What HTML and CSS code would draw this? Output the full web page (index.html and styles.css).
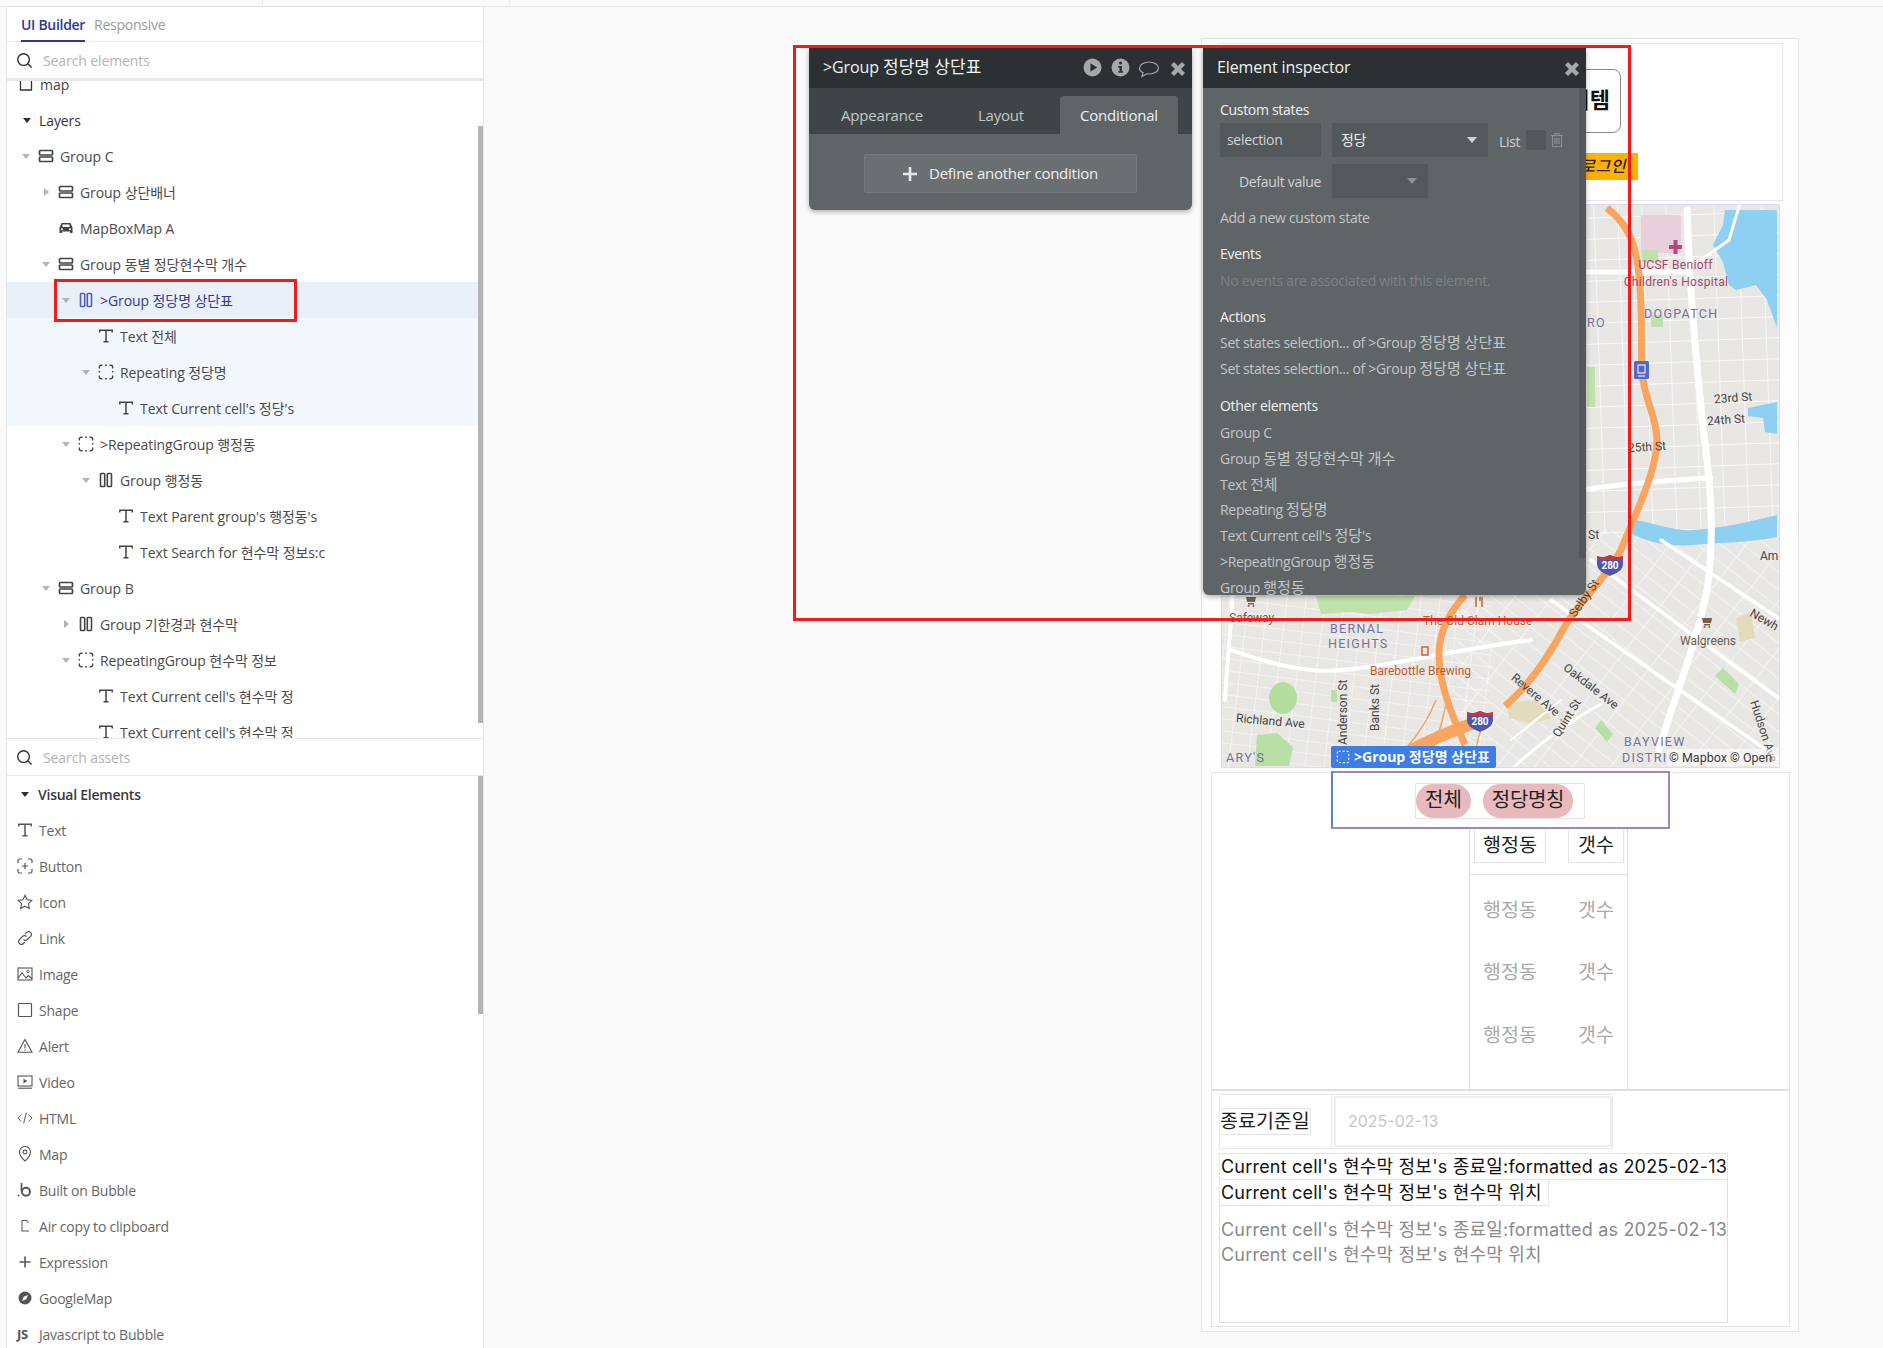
FILE: index.html
```html
<!DOCTYPE html>
<html lang="ko">
<head>
<meta charset="utf-8">
<title>UI Builder</title>
<link rel="stylesheet" href="styles.css">
</head>
<body>
<svg class="defs" width="0" height="0" aria-hidden="true">
  <symbol id="i-stack" viewBox="0 0 16 16"><g fill="none" stroke="currentColor" stroke-width="1.7"><rect x="1.5" y="2.5" width="13" height="4.5" rx=".8"/><rect x="1.5" y="9" width="13" height="4.5" rx=".8"/></g></symbol>
  <symbol id="i-col" viewBox="0 0 16 16"><g fill="none" stroke="currentColor" stroke-width="1.6"><rect x="2.500" y="1.500" width="4.200" height="13" rx=".8"/><rect x="9.300" y="1.500" width="4.200" height="13" rx=".8"/></g></symbol>
  <symbol id="i-rep" viewBox="0 0 18 18"><path d="M1.500 5V3.500a2 2 0 0 1 2-2H5M8 1.500h2M13 1.500h1.500a2 2 0 0 1 2 2V5M16.500 8v1.500M16.500 13v1.500a2 2 0 0 1-2 2H13M10 16.500H8M5 16.500H3.500a2 2 0 0 1-2-2V13M1.500 9.500V8" fill="none" stroke="currentColor" stroke-width="1.600"/></symbol>
  <symbol id="i-t" viewBox="0 0 16 16"><path d="M1.800 4.500V2.300h12.400v2.200M8 2.300v11.400M5.500 13.700h5" fill="none" stroke="currentColor" stroke-width="1.500"/></symbol>
  <symbol id="i-car" viewBox="0 0 16 16"><path d="M3.500 3h9l2 4.500V13h-2.500v-1.500H4V13H1.500V7.500z" fill="currentColor"/><rect x="4.500" y="4.500" width="7" height="2.500" fill="#fff"/><circle cx="4" cy="9.300" r="1" fill="#fff"/><circle cx="12" cy="9.300" r="1" fill="#fff"/></symbol>
  <symbol id="i-search" viewBox="0 0 18 18"><circle cx="8" cy="8" r="6.200" fill="none" stroke="currentColor" stroke-width="1.500"/><path d="M12.500 12.500l4 4" stroke="currentColor" stroke-width="1.500"/></symbol>
  <symbol id="i-page" viewBox="0 0 14 14"><path d="M4 1H1.500v12h11V1h-2.500" fill="none" stroke="currentColor" stroke-width="1.300"/></symbol>
  <symbol id="i-btn" viewBox="0 0 16 16"><path d="M1 5V2.500A1.500 1.500 0 0 1 2.500 1H5M11 1h2.500A1.500 1.500 0 0 1 15 2.500V5M15 11v2.500a1.500 1.500 0 0 1-1.500 1.500H11M5 15H2.500A1.500 1.500 0 0 1 1 13.500V11M8 5v6M5 8h6" fill="none" stroke="currentColor" stroke-width="1.200"/></symbol>
  <symbol id="i-star" viewBox="0 0 16 16"><path d="M8 1.300l2.100 4.400 4.800.7-3.500 3.300.9 4.800L8 12.200l-4.300 2.300.9-4.800L1.100 6.400l4.800-.7z" fill="none" stroke="currentColor" stroke-width="1.100"/></symbol>
  <symbol id="i-link" viewBox="0 0 16 16"><path d="M6.500 9.500a2.800 2.800 0 0 0 4 0l3-3a2.800 2.800 0 0 0-4-4L8.200 3.800M9.500 6.500a2.800 2.800 0 0 0-4 0l-3 3a2.800 2.800 0 0 0 4 4l1.300-1.300" fill="none" stroke="currentColor" stroke-width="1.100"/></symbol>
  <symbol id="i-img" viewBox="0 0 16 16"><rect x="1" y="2" width="14" height="12" fill="none" stroke="currentColor" stroke-width="1.100"/><path d="M1 12l4-5 4 5 2.500-2.500L15 13" fill="none" stroke="currentColor" stroke-width="1.100"/><circle cx="11" cy="5.500" r="1.200" fill="none" stroke="currentColor"/></symbol>
  <symbol id="i-shape" viewBox="0 0 16 16"><rect x="1.500" y="1.500" width="13" height="13" rx=".8" fill="none" stroke="currentColor" stroke-width="1.200"/></symbol>
  <symbol id="i-dash" viewBox="0 0 16 16"><rect x="1.500" y="1.500" width="13" height="13" rx="1.500" fill="none" stroke="currentColor" stroke-width="1.400" stroke-dasharray="2.500 2"/></symbol>
  <symbol id="i-alert" viewBox="0 0 16 16"><path d="M8 1.500l7 12.700H1zM8 6v4.500M8 11.500v1.300" fill="none" stroke="currentColor" stroke-width="1.100"/></symbol>
  <symbol id="i-video" viewBox="0 0 16 16"><rect x="1" y="2" width="14" height="10" fill="none" stroke="currentColor" stroke-width="1.100"/><path d="M6.500 4.700l4 2.300-4 2.300z" fill="currentColor"/><path d="M1 14.200h14" stroke="currentColor" stroke-width="1.100"/></symbol>
  <symbol id="i-html" viewBox="0 0 18 16"><path d="M5 4L1 8l4 4M13 4l4 4-4 4M10.500 2l-3 12" fill="none" stroke="currentColor" stroke-width="1.100"/></symbol>
  <symbol id="i-pin" viewBox="0 0 16 16"><path d="M8 15.200S2.500 10 2.500 6a5.500 5.500 0 0 1 11 0c0 4-5.500 9.200-5.500 9.200z" fill="none" stroke="currentColor" stroke-width="1.100"/><circle cx="8" cy="6" r="1.900" fill="none" stroke="currentColor" stroke-width="1.100"/></symbol>
  <symbol id="i-bubble" viewBox="0 0 16 16"><path d="M4.500 1v8.500" stroke="currentColor" stroke-width="1.700"/><circle cx="9" cy="9.800" r="4" fill="none" stroke="currentColor" stroke-width="1.900"/><circle cx="1.500" cy="13.500" r=".9" fill="currentColor"/></symbol>
  <symbol id="i-copy" viewBox="0 0 16 16"><path d="M4.500 2h5.500l1.500 1.500V5h-1V3.500L9.500 3H5.500v9.500H12v1H4.500z" fill="currentColor"/></symbol>
  <symbol id="i-plus" viewBox="0 0 16 16"><path d="M8 2.500v11M2.500 8h11" stroke="currentColor" stroke-width="1.600"/></symbol>
  <symbol id="i-plus-b" viewBox="0 0 16 16"><path d="M8 1v14M1 8h14" stroke="currentColor" stroke-width="2.600"/></symbol>
  <symbol id="i-compass" viewBox="0 0 16 16"><circle cx="8" cy="8" r="6.500" fill="currentColor"/><path d="M11 5l-1.800 4.200L5 11l1.800-4.200z" fill="#fff"/></symbol>
  <symbol id="i-play" viewBox="0 0 18 18"><circle cx="9" cy="9" r="8.500" fill="currentColor"/><path d="M7 5l6.500 4L7 13z" fill="#2b3133"/></symbol>
  <symbol id="i-info" viewBox="0 0 18 18"><circle cx="9" cy="9" r="8.500" fill="currentColor"/><circle cx="9" cy="4.700" r="1.500" fill="#2b3133"/><path d="M6.800 7.500h3.500v5h1.200V14H6.800v-1.500H8V9H6.800z" fill="#2b3133"/></symbol>
  <symbol id="i-chat" viewBox="0 0 22 18"><path d="M11 2c5 0 9.500 2.500 9.500 6s-4.500 6-9.500 6c-.8 0-1.500 0-2.300-.2L4 16.500l1-3.800C2.800 11.700 1.500 10 1.500 8 1.500 4.500 6 2 11 2z" fill="none" stroke="currentColor" stroke-width="1.200"/></symbol>
  <symbol id="i-x" viewBox="0 0 14 14"><path d="M2.200 2.200l9.600 9.600M11.800 2.200l-9.600 9.600" stroke="currentColor" stroke-width="3.800"/></symbol>
  <symbol id="i-trash" viewBox="0 0 14 16"><path d="M1 3.500h12M5 3.500V1.500h4v2M2.500 3.500v11h9v-11M5 6v6M7 6v6M9 6v6" fill="none" stroke="currentColor" stroke-width="1.100"/></symbol>
  <symbol id="i-cart" viewBox="0 0 12 12"><path d="M1 2h10l-1 5H2zM3 8h6v1.500H3z" fill="currentColor"/><circle cx="3.500" cy="11" r="1" fill="currentColor"/><circle cx="8.500" cy="11" r="1" fill="currentColor"/></symbol>
</svg>

<div class="topstrip"><span class="tick tick-a"></span><span class="tick tick-b"></span></div>

<div class="app">
  <aside class="sidebar">
    <div class="tabs">
      <span class="tab tab-on">UI Builder</span>
      <span class="tab">Responsive</span>
    </div>
    <div class="search search-top">
      <svg class="search-ic"><use href="#i-search"/></svg>
      <span>Search elements</span>
    </div>

    <div class="tree-wrap">
      <div class="tree">
        <div class="tree-head"><svg class="ic-page"><use href="#i-page"/></svg><span>map</span></div>
        <div class="tree-title"><i class="ar ar-down ar-dark"></i><span>Layers</span></div>

        <div class="row lv0"><i class="ar ar-down"></i><svg class="ic"><use href="#i-stack"/></svg><span>Group C</span></div>
        <div class="row lv1"><i class="ar ar-right"></i><svg class="ic"><use href="#i-stack"/></svg><span>Group 상단배너</span></div>
        <div class="row lv1"><i class="ar"></i><svg class="ic"><use href="#i-car"/></svg><span>MapBoxMap A</span></div>
        <div class="row lv1"><i class="ar ar-down"></i><svg class="ic"><use href="#i-stack"/></svg><span>Group 동별 정당현수막 개수</span></div>
        <div class="row lv2 row-active"><i class="ar ar-down"></i><svg class="ic"><use href="#i-col"/></svg><span>&gt;Group 정당명 상단표</span></div>
        <div class="row lv3 row-child"><i class="ar"></i><svg class="ic"><use href="#i-t"/></svg><span>Text 전체</span></div>
        <div class="row lv3 row-child"><i class="ar ar-down"></i><svg class="ic"><use href="#i-rep"/></svg><span>Repeating 정당명</span></div>
        <div class="row lv4 row-child"><i class="ar"></i><svg class="ic"><use href="#i-t"/></svg><span>Text Current cell's 정당's</span></div>
        <div class="row lv2"><i class="ar ar-down"></i><svg class="ic"><use href="#i-rep"/></svg><span>&gt;RepeatingGroup 행정동</span></div>
        <div class="row lv3"><i class="ar ar-down"></i><svg class="ic"><use href="#i-col"/></svg><span>Group 행정동</span></div>
        <div class="row lv4"><i class="ar"></i><svg class="ic"><use href="#i-t"/></svg><span>Text Parent group's 행정동's</span></div>
        <div class="row lv4"><i class="ar"></i><svg class="ic"><use href="#i-t"/></svg><span>Text Search for 현수막 정보s:c</span></div>
        <div class="row lv1"><i class="ar ar-down"></i><svg class="ic"><use href="#i-stack"/></svg><span>Group B</span></div>
        <div class="row lv2"><i class="ar ar-right"></i><svg class="ic"><use href="#i-col"/></svg><span>Group 기한경과 현수막</span></div>
        <div class="row lv2"><i class="ar ar-down"></i><svg class="ic"><use href="#i-rep"/></svg><span>RepeatingGroup 현수막 정보</span></div>
        <div class="row lv3"><i class="ar"></i><svg class="ic"><use href="#i-t"/></svg><span>Text Current cell's 현수막 정</span></div>
        <div class="row lv3"><i class="ar"></i><svg class="ic"><use href="#i-t"/></svg><span>Text Current cell's 현수막 정</span></div>
      </div>
      <div class="thumb thumb-tree"></div>
    </div>

    <div class="search search-assets">
      <svg class="search-ic"><use href="#i-search"/></svg>
      <span>Search assets</span>
    </div>

    <div class="assets">
      <div class="asset-title"><i class="ar ar-down ar-dark"></i><span>Visual Elements</span></div>
      <div class="asset"><svg class="aic"><use href="#i-t"/></svg><span>Text</span></div>
      <div class="asset"><svg class="aic"><use href="#i-btn"/></svg><span>Button</span></div>
      <div class="asset"><svg class="aic"><use href="#i-star"/></svg><span>Icon</span></div>
      <div class="asset"><svg class="aic"><use href="#i-link"/></svg><span>Link</span></div>
      <div class="asset"><svg class="aic"><use href="#i-img"/></svg><span>Image</span></div>
      <div class="asset"><svg class="aic"><use href="#i-shape"/></svg><span>Shape</span></div>
      <div class="asset"><svg class="aic"><use href="#i-alert"/></svg><span>Alert</span></div>
      <div class="asset"><svg class="aic"><use href="#i-video"/></svg><span>Video</span></div>
      <div class="asset"><svg class="aic"><use href="#i-html"/></svg><span>HTML</span></div>
      <div class="asset"><svg class="aic"><use href="#i-pin"/></svg><span>Map</span></div>
      <div class="asset"><svg class="aic"><use href="#i-bubble"/></svg><span>Built on Bubble</span></div>
      <div class="asset"><svg class="aic"><use href="#i-copy"/></svg><span>Air copy to clipboard</span></div>
      <div class="asset"><svg class="aic"><use href="#i-plus"/></svg><span>Expression</span></div>
      <div class="asset"><svg class="aic"><use href="#i-compass"/></svg><span>GoogleMap</span></div>
      <div class="asset"><b class="aic-js">JS</b><span>Javascript to Bubble</span></div>
      <div class="thumb thumb-assets"></div>
    </div>
  </aside>

  <main class="canvas">
    <div class="page">
      <section class="banner">
        <div class="banner-title">아이템</div>
        <div class="banner-login">로그인</div>
      </section>

      <div class="mapframe">
        <svg class="map" viewBox="1221 205 557 562" preserveAspectRatio="none">
          <defs>
            <pattern id="gridA" width="24" height="21" patternUnits="userSpaceOnUse" patternTransform="rotate(-2)"><path d="M0 0H24M0 0V21" stroke="#fff" stroke-width="1.300" fill="none"/></pattern>
            <pattern id="gridB" width="19" height="12" patternUnits="userSpaceOnUse" patternTransform="rotate(7)"><path d="M0 0H19M0 0V12" stroke="#fff" stroke-width="1.100" fill="none"/></pattern>
            <pattern id="gridC" width="30" height="14" patternUnits="userSpaceOnUse" patternTransform="rotate(38)"><path d="M0 0H30M0 0V14" stroke="#fff" stroke-width="1.100" fill="none"/></pattern>
          </defs>
          <rect x="1221" y="205" width="557" height="562" fill="#e9e7e4"/>
          <rect x="1580" y="205" width="200" height="330" fill="url(#gridA)"/>
          <rect x="1221" y="590" width="270" height="180" fill="url(#gridB)"/>
          <path d="M1470 530H1780V770H1440z" fill="url(#gridC)"/>

          <path d="M1640 215h40v38h-40z" fill="#e9cfdc"/>
          <path d="M1641 250h16v12h-16z" fill="#bfe2ac"/>
          <path d="M1650 315h12v12h-12zM1586 367h8v40h-8z" fill="#bfe2ac"/>
          <path d="M1315 596h99l-8 14-36 4-20-2-30 2z" fill="#bfe2ac"/>
          <ellipse cx="1282" cy="698" rx="14" ry="16" fill="#b3dea0"/>
          <path d="M1256 735l20-2 16 14-4 19h-34z" fill="#b8e0a6"/>
          <path d="M1330 690h6v12h-6zM1722 668l16 16-4 10-20-18zM1600 720l12 14-6 8-12-14z" fill="#b8e0a6"/>
          <path d="M1506 703l30-3 14 18-20 6-22-6z" fill="#e2dcbc"/>
          <path d="M1735 618l15-6 4 26-15 4z" fill="#e2dcbc"/>
          <path d="M1724 210h52v118l-10-28-11-15-20 5-7-5-6-23-10-17 10-20z" fill="#8dd0f1"/>
          <path d="M1747 408l29-6v32l-12-2-2-14-15-2z" fill="#8dd0f1"/>
          <path d="M1632 520c12 0 40 12 60 10 30-2 56-8 84-15v22c-30 6-55 5-84 8-26 2-50-4-62-12z" fill="#8dd0f1"/>

          <g fill="none" stroke="#fff" stroke-linecap="round">
            <path d="M1686 210c2 60 8 150 20 250 6 50 6 90 0 130-12 60-34 110-48 160" stroke-width="7"/>
            <path d="M1586 272h100M1580 490c40-6 90-10 130-12" stroke-width="5"/>
            <path d="M1230 650c30 10 70 24 110 20 40-2 110-20 190-30" stroke-width="4"/>
            <path d="M1740 200l-12 40-28 20" stroke-width="3"/>
            <path d="M1550 600l100 70 130 90M1590 560l190 140M1660 540l120 80" stroke-width="3.500"/>
            <path d="M1510 770c20-20 60-50 90-66" stroke-width="3"/>
            <path d="M1232 590c-2 40-6 70-8 110" stroke-width="4"/>
            <path d="M1510 740l50-40" stroke-width="2"/>
          </g>

          <g fill="none" stroke="#f9a45f" stroke-linecap="butt">
            <path d="M1606 208c18 14 26 30 30 52 8 50 2 90 6 120 4 24 14 40 14 60 0 30-20 70-36 110-16 30-40 50-56 76-16 30-34 58-60 80" stroke-width="7"/>
            <path d="M1464 595c-14 16-26 34-26 60 0 28 12 58 26 90" stroke-width="7"/>
            <path d="M1479 721c-30 10-60 24-78 34" stroke-width="12"/>
            <path d="M1435 700c-8 20-16 32-28 46M1446 700c-4 16-6 30-14 50M1480 730c-4 10-6 20-6 36" stroke-width="1.500"/>
          </g>

          <g>
            <path d="M1596 556c4 2 9 1 13-1 4 2 9 3 13 1v8c0 6-6 9-13 12-7-3-13-6-13-12z" fill="#4b57b0"/>
            <path d="M1596 556c4 2 9 1 13-1 4 2 9 3 13 1v4h-26z" fill="#c8363a"/>
            <text x="1609" y="569" class="shield-t">280</text>
          </g>
          <g transform="translate(-130 156)">
            <path d="M1596 556c4 2 9 1 13-1 4 2 9 3 13 1v8c0 6-6 9-13 12-7-3-13-6-13-12z" fill="#4b57b0"/>
            <path d="M1596 556c4 2 9 1 13-1 4 2 9 3 13 1v4h-26z" fill="#c8363a"/>
            <text x="1609" y="569" class="shield-t">280</text>
          </g>
          <rect x="1633" y="361" width="15" height="18" rx="1.500" fill="#5668c6"/>
          <rect x="1637" y="365" width="7" height="8" fill="none" stroke="#fff"/>
          <path d="M1637 376h7" stroke="#fff"/>
          <path d="M1674.500 240v14M1668 247h13" stroke="#b34a7a" stroke-width="4"/>

          <svg x="1244" y="595" width="12" height="12" class="m-poi"><use href="#i-cart"/></svg>
          <svg x="1700" y="616" width="12" height="12" class="m-poi"><use href="#i-cart"/></svg>
          <path d="M1475 597v10M1479 597v4M1481 597v10M1421 647h6v8h-6z" stroke="#c7643a" stroke-width="1.500" fill="none"/>

          <text x="1674.500" y="269" class="m-c m-hosp">UCSF Benioff</text>
          <text x="1675" y="286" class="m-c m-hosp">Children's Hospital</text>
          <text x="1643" y="318" class="m-area">DOGPATCH</text>
          <text x="1586" y="327" class="m-area">RO</text>
          <text x="1713" y="402" class="m-road" transform="rotate(-4 1731 398)">23rd St</text>
          <text x="1706" y="424" class="m-road" transform="rotate(-4 1724 420)">24th St</text>
          <text x="1627" y="451" class="m-road" transform="rotate(-3 1644 447)">25th St</text>
          <text x="1587" y="539" class="m-road">St</text>
          <text x="1759" y="560" class="m-road">Am</text>
          <text x="1750" y="616" class="m-road" transform="rotate(30 1750 612)">Newh</text>
          <text x="1707" y="645" class="m-c m-poit">Walgreens</text>
          <text x="1228" y="622" class="m-poit">Safeway</text>
          <text x="1422" y="625" class="m-red">The Old Clam House</text>
          <text x="1329" y="633" class="m-area">BERNAL</text>
          <text x="1327" y="648" class="m-area">HEIGHTS</text>
          <text x="1369" y="675" class="m-red">Barebottle Brewing</text>
          <text x="1235" y="722" class="m-road" transform="rotate(5 1235 720)">Richland Ave</text>
          <text x="1346" y="745" class="m-road" transform="rotate(-90 1346 745)">Anderson St</text>
          <text x="1378" y="731" class="m-road" transform="rotate(-90 1378 731)">Banks St</text>
          <text x="1512" y="680" class="m-road" transform="rotate(40 1512 676)">Revere Ave</text>
          <text x="1564" y="670" class="m-road" transform="rotate(38 1564 666)">Oakdale Ave</text>
          <text x="1558" y="738" class="m-road" transform="rotate(-58 1558 738)">Quint St</text>
          <text x="1749" y="702" class="m-road" transform="rotate(72 1749 702)">Hudson Ave</text>
          <text x="1574" y="618" class="m-road" transform="rotate(-55 1574 618)">Selby St</text>
          <text x="1623" y="746" class="m-area">BAYVIEW</text>
          <text x="1621" y="762" class="m-area">DISTRI</text>
          <text x="1225" y="762" class="m-area">ARY'S</text>
          <rect x="1666" y="749" width="112" height="17" fill="#fff" fill-opacity=".55"/>
          <text x="1668" y="762" class="m-copy">© Mapbox © Open</text>
        </svg>
      </div>

      <section class="panel-a">
        <div class="selected">
          <div class="tag"><svg class="tag-ic"><use href="#i-dash"/></svg>&gt;Group 정당명 상단표</div>
          <div class="pills">
            <span class="pill pill-a">전체</span>
            <span class="pill pill-b">정당명칭</span>
          </div>
        </div>
        <div class="table">
          <div class="thead">
            <span class="cell-a cell-box">행정동</span>
            <span class="cell-b cell-box">갯수</span>
          </div>
          <div class="tbody">
            <div class="trow"><span class="cell-a">행정동</span><span class="cell-b">갯수</span></div>
            <div class="trow"><span class="cell-a">행정동</span><span class="cell-b">갯수</span></div>
            <div class="trow"><span class="cell-a">행정동</span><span class="cell-b">갯수</span></div>
          </div>
        </div>
      </section>

      <section class="panel-b">
        <div class="date-row">
          <div class="date-label"><span class="date-text">종료기준일</span></div>
          <div class="date-input">2025-02-13</div>
        </div>
        <div class="line line-box line-full">Current cell's 현수막 정보's 종료일:formatted as 2025-02-13</div>
        <div class="rg">
          <div class="line line-box line-fit">Current cell's 현수막 정보's 현수막 위치</div>
          <div class="rg-cell">
            <div class="line line-grey">Current cell's 현수막 정보's 종료일:formatted as 2025-02-13</div>
            <div class="line line-grey">Current cell's 현수막 정보's 현수막 위치</div>
          </div>
        </div>
      </section>
    </div>
  </main>
</div>

<div class="win win-prop">
  <header class="win-head">
    <span class="win-title">&gt;Group <span class="ko">정당명 상단표</span></span>
    <svg class="wi wi-play"><use href="#i-play"/></svg>
    <svg class="wi wi-info"><use href="#i-info"/></svg>
    <svg class="wi wi-chat"><use href="#i-chat"/></svg>
    <svg class="wi wi-x"><use href="#i-x"/></svg>
  </header>
  <nav class="win-tabs">
    <span class="wt wt-a">Appearance</span>
    <span class="wt wt-b">Layout</span>
    <span class="wt wt-c">Conditional</span>
  </nav>
  <div class="win-body">
    <div class="define"><svg class="define-ic"><use href="#i-plus-b"/></svg>Define another condition</div>
  </div>
</div>

<div class="win win-insp">
  <header class="win-head">
    <span class="win-title">Element inspector</span>
    <svg class="wi wi-x"><use href="#i-x"/></svg>
  </header>
  <div class="insp-body">
    <h4 class="ih ih-first">Custom states</h4>
    <div class="state-row">
      <span class="field field-name">selection</span>
      <span class="field field-type">정당<i class="caret"></i></span>
      <span class="list-lab">List</span>
      <span class="check"></span>
      <svg class="trash"><use href="#i-trash"/></svg>
    </div>
    <div class="default-row">
      <span class="default-lab">Default value</span>
      <span class="field field-def"><i class="caret caret-dim"></i></span>
    </div>
    <p class="il il-add">Add a new custom state</p>
    <h4 class="ih ih-events">Events</h4>
    <p class="il il-none">No events are associated with this element.</p>
    <h4 class="ih ih-actions">Actions</h4>
    <p class="il il-act">Set states selection... of &gt;Group <span class="ko">정당명 상단표</span></p>
    <p class="il il-act">Set states selection... of &gt;Group <span class="ko">정당명 상단표</span></p>
    <h4 class="ih ih-other">Other elements</h4>
    <p class="il il-el">Group C</p>
    <p class="il il-el">Group <span class="ko">동별 정당현수막 개수</span></p>
    <p class="il il-el">Text <span class="ko">전체</span></p>
    <p class="il il-el">Repeating <span class="ko">정당명</span></p>
    <p class="il il-el">Text Current cell's <span class="ko">정당</span>'s</p>
    <p class="il il-el">&gt;RepeatingGroup <span class="ko">행정동</span></p>
    <p class="il il-el">Group <span class="ko">행정동</span></p>
  </div>
  <div class="insp-scroll"></div>
</div>

<div class="redbox redbox-big"></div>
<div class="redbox redbox-small"></div>
</body>
</html>
```

FILE: styles.css
```css
* { box-sizing: border-box; }
html, body { margin: 0; padding: 0; }
body {
  width: 1883px;
  height: 1348px;
  overflow: hidden;
  position: relative;
  background: #fafafa;
  font-family: "Open Sans", "Noto Sans CJK KR", sans-serif;
  font-size: 14px;
  color: #444;
}
.defs { position: absolute; }
svg { display: block; overflow: hidden; }

.topstrip { height: 7px; border-bottom: 1px solid #e3e3e3; display: flex; background: #fafafa; }
.tick { width: 1px; height: 6px; background: #ececec; }
.tick-a { margin-left: 262px; }
.tick-b { margin-left: 246px; }

.app { display: flex; height: 1341px; }

/* sidebar */
.sidebar {
  margin-left: 6px;
  width: 478px;
  flex: none;
  background: #fff;
  border-left: 1px solid #e6e6e6;
  border-right: 1px solid #e6e6e6;
  display: flex;
  flex-direction: column;
  overflow: hidden;
}
.tabs { height: 35px; flex: none; display: flex; gap: 9px; padding-left: 14px; border-bottom: 1px solid #e8e8e8; }
.tab { line-height: 35px; height: 35px; color: #9a9a9a; letter-spacing: -.25px; }
.tab-on { color: #2c3a94; font-weight: 600; border-bottom: 2px solid #2c3a94; letter-spacing: -.3px; }

.search { display: flex; align-items: center; flex: none; color: #b3b3b3; letter-spacing: -.1px; }
.search-ic { width: 17px; height: 17px; margin: 0 10px 0 9px; color: #333; flex: none; }
.search-top { height: 39px; border-bottom: 3px solid #e8e8e8; padding-top: 1px; }
.search-assets { height: 38px; border-top: 1px solid #e8e8e8; border-bottom: 1px solid #e8e8e8; }

.tree-wrap { position: relative; height: 657px; flex: none; overflow: hidden; }
.tree { margin-top: -15px; height: 672px; overflow: hidden; }
.thumb { position: absolute; right: 0; width: 5px; background: #b3b3b3; }
.thumb-tree { top: 45px; height: 597px; }

.tree-head { height: 36px; display: flex; align-items: center; padding-left: 12px; gap: 7px; color: #444; }
.ic-page { width: 14px; height: 14px; color: #333; }
.tree-title { height: 36px; display: flex; align-items: center; padding-left: 14px; color: #333; font-weight: 500; letter-spacing: -.1px; }
.tree-title span { margin-left: 6px; }

.ar { display: block; width: 12px; height: 12px; flex: none; position: relative; }
.ar::after { content: ""; position: absolute; left: 2px; top: 4px; border-style: solid; border-color: transparent; }
.ar-down::after { border-width: 5px 4px 0 4px; border-top-color: #b4b4b4; }
.ar-right::after { left: 4px; top: 2px; border-width: 4px 0 4px 5px; border-left-color: #b4b4b4; }
.ar-dark.ar-down::after { border-top-color: #2e2e2e; }

.row { height: 36px; display: flex; align-items: center; color: #4a4a4a; letter-spacing: -.08px; }
.row span { margin-left: 4px; white-space: nowrap; }
.ic { width: 16px; height: 16px; margin-left: 6px; margin-right: 2px; flex: none; color: #444; }
.lv0 { padding-left: 13px; }
.lv1 { padding-left: 33px; }
.lv2 { padding-left: 53px; }
.lv3 { padding-left: 73px; }
.lv4 { padding-left: 93px; }
.row-active { background: #e9f0fa; color: #2d3a9c; }
.row-active .ic { color: #4d5fc4; }
.row-child { background: #f3f8fe; }

.assets { position: relative; flex: 1; min-height: 0; }
.thumb-assets { top: 0; height: 238px; }
.asset-title { height: 36px; display: flex; align-items: center; padding-left: 12px; font-weight: 600; color: #3a3a3a; letter-spacing: -.25px; }
.asset-title span { margin-left: 7px; }
.asset { height: 36px; display: flex; align-items: center; color: #666; white-space: nowrap; letter-spacing: -.22px; }
.aic { width: 16px; height: 16px; margin-left: 10px; margin-right: 6px; flex: none; color: #555; }
.aic-js { width: 16px; margin-left: 10px; margin-right: 6px; font-size: 13px; color: #555; font-weight: 700; letter-spacing: -.3px; }

/* canvas */
.canvas { flex: 1; min-width: 0; }
.page {
  margin: 31px 0 0 717px;
  width: 598px;
  height: 1294px;
  border: 1px solid #e4e4e4;
  background: #fdfdfd;
  padding-top: 4px;
  font-family: Inter, "Noto Sans CJK KR", sans-serif;
  color: #111;
}
.banner {
  margin-left: 16px;
  width: 565px;
  height: 158px;
  border: 1px solid #e6e6e6;
  background: #fff;
  position: relative;
}
.banner-title {
  position: absolute;
  left: 290px;
  top: 25px;
  width: 112px;
  height: 64px;
  border: 1px solid #888;
  border-radius: 8px;
  text-align: right;
  padding-right: 10px;
  font-size: 22px;
  font-weight: 600;
  line-height: 60px;
  color: #111;
}
.banner-login {
  position: absolute;
  left: 280px;
  top: 109px;
  width: 139px;
  height: 27px;
  background: #ffb000;
  color: #222;
  text-align: right;
  padding-right: 12px;
  font-size: 16px;
  font-style: italic;
  font-weight: 500;
  letter-spacing: .5px;
  line-height: 26px;
}
.mapframe {
  margin: 3px 0 0 19px;
  width: 559px;
  height: 564px;
  border: 1px solid #dcdcee;
  background: #fff;
  position: relative;
}
.map { width: 557px; height: 562px; }
.m-c { text-anchor: middle; }
.map text { font-family: Roboto, "Liberation Sans", sans-serif; }
.m-hosp { font-size: 12px; fill: #a04a70; letter-spacing: .3px; }
.m-area { font-size: 12.500px; fill: #70729f; letter-spacing: 1.300px; }
.m-road { font-size: 12px; fill: #454545; }
.m-poit { font-size: 12px; fill: #6d5b4e; }
.m-red { font-size: 12px; fill: #c35c30; }
.m-copy { font-size: 12.500px; fill: #3c3c3c; }
.m-poi { color: #7c5d4a; }
.shield-t { font-size: 10px; font-weight: 700; fill: #fff; text-anchor: middle; }

.panel-a {
  margin: 4px 0 0 9px;
  width: 579px;
  height: 317px;
  background: #fff;
  border: 1px solid #e4e4e4;
  border-bottom: 0;
  display: flex;
  flex-direction: column;
}
.selected {
  position: relative;
  margin-left: 119px;
  width: 339px;
  height: 58px;
  flex: none;
  margin-top: -2px;
  border: 2px solid #a283b6;
  border-left-color: #5d80d8;
  display: flex;
  justify-content: center;
  padding: 10px 0 0 0;
}
.tag {
  position: absolute;
  left: -2px;
  top: -27px;
  width: 165px;
  height: 22px;
  background: #3e7de3;
  border-radius: 2px;
  color: #fff;
  font: 700 14px "Open Sans", "Noto Sans CJK KR", sans-serif;
  line-height: 22px;
  display: flex;
  align-items: center;
  white-space: nowrap;
  padding-left: 5px;
}
.tag-ic { width: 14px; height: 14px; margin-right: 4px; color: #dfe9fb; }
.pills {
  display: flex;
  gap: 12px;
  width: 170px;
  height: 36px;
  border: 1px solid #e6e6e6;
  margin-left: -1px;
}
.pill {
  display: block;
  height: 34px;
  background: #e8b9bd;
  border-radius: 17px;
  text-align: center;
  line-height: 32px;
  font-size: 20px;
  color: #222;
}
.pill-a { width: 55px; }
.pill-b { width: 90px; letter-spacing: -.3px; }

.table {
  margin-left: 257px;
  width: 159px;
  flex: 1;
  border-left: 1px solid #dedede;
  border-right: 1px solid #dedede;
  display: flex;
  flex-direction: column;
}
.thead { height: 45px; display: flex; flex: none; align-items: flex-start; padding-bottom: 11px; }
.cell-a { display: block; width: 72px; margin-left: 4px; text-align: center; font-size: 19.500px; }
.cell-b { display: block; width: 56px; margin-left: 22px; text-align: center; font-size: 19.500px; }
.cell-box { height: 34px; line-height: 33px; border: 1px solid #e4e4e4; border-top: 0; color: #222; background: #fff; }
.tbody { flex: 1; border-top: 1px solid #e0e0e0; padding-top: 2px; }
.trow { height: 62.500px; display: flex; align-items: center; color: #aaa; }

.panel-b {
  margin-left: 9px;
  width: 579px;
  height: 238px;
  background: #fff;
  border: 1px solid #e4e4e4;
  border-top: 2px solid #dedede;
  padding: 3px 0 0 7px;
}
.date-row {
  width: 394px;
  height: 55px;
  border: 1px solid #e8e8e8;
  display: flex;
  align-items: center;
}
.date-label { width: 112px; height: 100%; flex: none; border-right: 1px solid #e8e8e8; display: flex; align-items: center; }
.date-text {
  display: block;
  width: 91px;
  height: 27px;
  border: 1px solid #e4e4e4;
  border-left: 0;
  font-size: 19.500px;
  line-height: 24px;
  color: #222;
  white-space: nowrap;
}
.date-input {
  margin-left: 2px;
  width: 278px;
  height: 51px;
  border: 2px solid #eee;
  border-radius: 3px;
  padding-left: 12px;
  line-height: 47px;
  font-size: 16px;
  color: #c6c6c6;
}
.line { font-size: 18px; white-space: nowrap; line-height: 26px; letter-spacing: .21px; }
.line-box { border: 1px solid #e4e4e4; padding-left: 1px; color: #111; background: #fff; height: 27px; }
.line-full { margin-top: 4px; width: 509px; }
.line-fit { width: 330px; margin-top: -1px; margin-left: -1px; }
.rg { width: 509px; height: 144px; border: 1px solid #dedede; border-top: 0; }
.rg-cell { padding: 11px 0 0 1px; }
.line-grey { color: #8a8a8a; line-height: 25px; }

/* floating editor windows */
.win {
  position: absolute;
  background: #5f6467;
  border-radius: 0 0 6px 6px;
  box-shadow: 0 2px 5px rgba(0,0,0,.3);
  color: #ddd;
  overflow: hidden;
}
.win-head { height: 40px; background: #2b3133; display: flex; align-items: center; padding-left: 14px; position: relative; color: #f2f2f2; }
.win-title { font-size: 16px; line-height: 40px; margin-top: -2px; letter-spacing: -.1px; }
.win-title .ko { font-size: 17px; }
.ko { font-size: 15px; letter-spacing: 0; line-height: 1; }
.wi { position: absolute; color: #a5a9aa; }
.wi-play { width: 19px; height: 19px; left: 274px; top: 10px; }
.wi-info { width: 19px; height: 19px; left: 302px; top: 10px; }
.wi-chat { width: 22px; height: 18px; left: 329px; top: 12px; }
.wi-x { width: 16px; height: 16px; right: 6px; top: 13px; }

.win-prop { left: 809px; top: 48px; width: 383px; height: 162px; }
.win-tabs { height: 46px; background: #3f4547; position: relative; display: flex; }
.wt { position: absolute; top: 8px; height: 38px; line-height: 38px; font-size: 15px; color: #c4c7c8; text-align: center; letter-spacing: -.2px; }
.wt-a { left: 23px; width: 100px; }
.wt-b { left: 152px; width: 80px; }
.wt-c { left: 251px; width: 118px; background: #5f6467; color: #f1f1f1; border-radius: 4px 4px 0 0; }
.win-body { padding: 20px 0 0 55px; }
.define {
  width: 273px;
  height: 39px;
  background: #6a6f72;
  border: 1px solid #74797b;
  border-radius: 2px;
  display: flex;
  align-items: center;
  padding: 0 0 2px 37px;
  font-size: 15px;
  letter-spacing: -.25px;
  color: #f0f0f0;
}
.define-ic { width: 16px; height: 16px; margin-right: 11px; color: #e6e6e6; margin-top: 2px; }

.win-insp { left: 1203px; top: 48px; width: 383px; height: 547px; }
.insp-body { padding-left: 17px; height: 507px; overflow: hidden; letter-spacing: -.3px; }
.insp-scroll { position: absolute; right: 0; top: 40px; width: 7px; height: 470px; background: #54585b; }
.ih { margin: 0; font-size: 14px; font-weight: 400; color: #f1f1f1; line-height: 20px; }
.il { margin: 0; font-size: 14px; color: #c3c6c7; line-height: 20px; height: 20px; white-space: nowrap; }
.ih-first { margin-top: 12px; }
.state-row { display: flex; align-items: center; margin-top: 3px; height: 34px; }
.field { display: block; height: 34px; background: #53585b; font-size: 14px; line-height: 33px; color: #d2d4d5; position: relative; flex: none; }
.field-name { width: 101px; padding-left: 7px; }
.field-type { width: 156px; margin-left: 11px; padding-left: 9px; color: #eee; }
.field-def { width: 96px; height: 34px; }
.caret { position: absolute; right: 11px; top: 14px; border-style: solid; border-width: 6px 5px 0 5px; border-color: #d4d4d4 transparent transparent; }
.caret-dim { border-top-color: #8e9294; }
.list-lab { margin-left: 11px; color: #cfd1d2; margin-top: 2px; }
.check { width: 20px; height: 20px; margin-left: 6px; background: #52575a; border-radius: 2px; flex: none; }
.trash { width: 14px; height: 16px; margin-left: 4px; color: #8c9092; flex: none; }
.default-row { display: flex; align-items: center; margin-top: 7px; height: 34px; }
.default-lab { width: 101px; text-align: right; color: #d0d2d3; }
.default-row .field-def { margin-left: 11px; }
.il-add { margin-top: 10px; }
.ih-events { margin-top: 16px; }
.il-none { margin-top: 7px; color: #7d8284; }
.ih-actions { margin-top: 16px; }
.il-act { margin-top: 6px; }
.ih-other { margin-top: 17px; }
.il-el { margin-top: 5.800px; }
.ih-other + .il-el { margin-top: 7px; }

/* review annotations */
.redbox { position: absolute; border: 3px solid #f01c1c; pointer-events: none; }
.redbox-big { left: 793px; top: 45px; width: 838px; height: 576px; }
.redbox-small { left: 54px; top: 279px; width: 243px; height: 43px; }
```
